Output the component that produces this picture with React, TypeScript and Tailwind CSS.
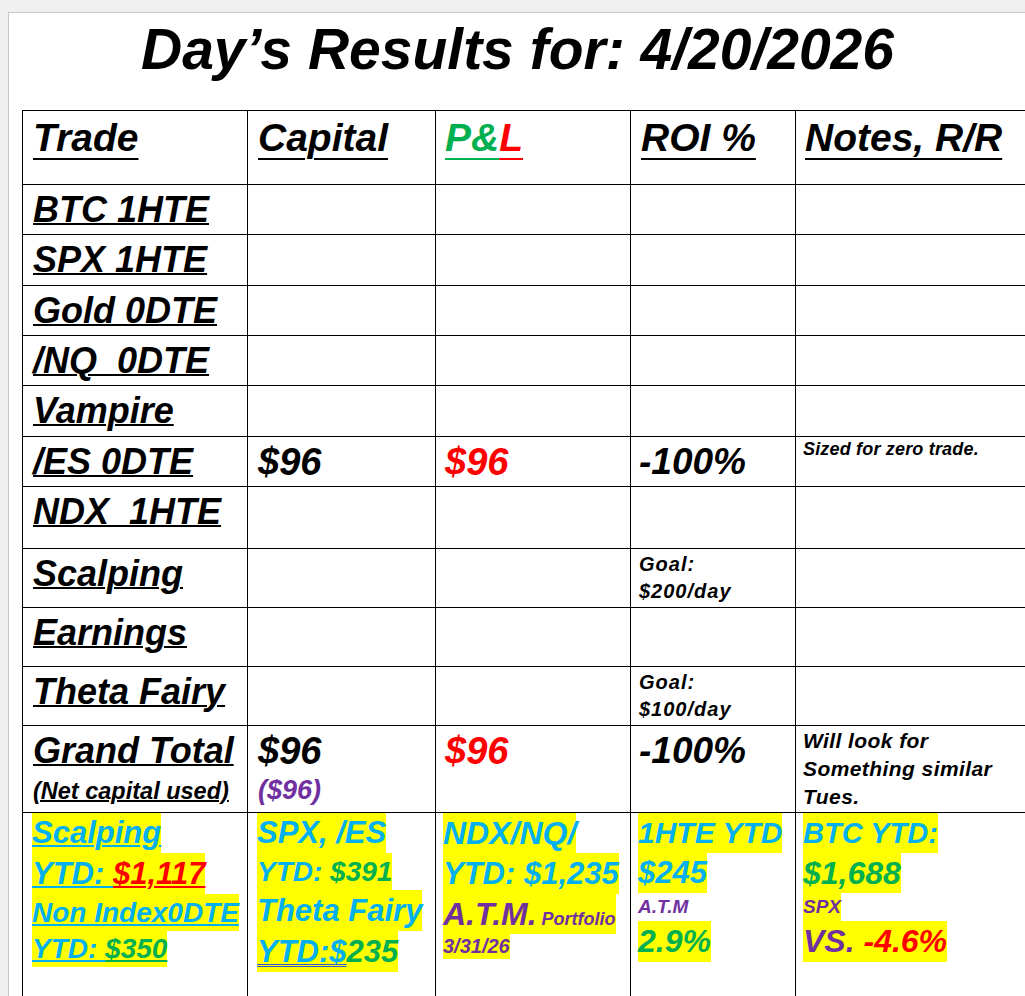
import React from "react";

const CY = "text-[#00b0f0]";
const GR = "text-[#00b050]";
const RD = "text-[#ff0000]";
const PU = "text-[#7030a0]";
const UL = "underline decoration-[1.5px] underline-offset-[2px]";

function Label({ children, pre }: { children: React.ReactNode; pre?: boolean }) {
  return (
    <div className="bg-white pl-[10px] pt-[7px] text-[36px] leading-[36px]">
      <span className={"underline decoration-[1.5px] underline-offset-[1px] " + (pre ? "whitespace-pre" : "")}>{children}</span>
    </div>
  );
}

function Blank() {
  return <div className="bg-white" />;
}

const HL = "inline-block bg-[#ffff00] align-top whitespace-pre";

export default function App() {
  return (
    <div className="w-[1025px] h-[996px] overflow-hidden bg-[#f0f0f0] font-['Liberation_Sans',Arial,sans-serif] font-bold italic text-black">
      <div className="ml-[8px] mt-[12px] w-[1100px] h-[1000px] border border-[#c8c8c8] bg-white">
        <div className="pl-[132px] pt-[8px] text-[57px] leading-[56px] whitespace-pre">Day’s Results for: 4/20/2026</div>
        <div className="ml-[13px] mt-[33px] grid grid-cols-[224px_187px_194px_164px_300px] grid-rows-[73px_49px_50px_49px_49px_50px_49px_61px_58px_58px_58px_86px_200px] gap-px bg-black p-px">
          {/* Header */}
          <div className="bg-white pl-[10px] pt-[7px] text-[39px] leading-[39px]">
            <span className="underline decoration-[2px] underline-offset-[7px]">Trade</span>
          </div>
          <div className="bg-white pl-[10px] pt-[7px] text-[39px] leading-[39px]">
            <span className="underline decoration-[2px] underline-offset-[7px]">Capital</span>
          </div>
          <div className="bg-white pl-[9px] pt-[7px] text-[39px] leading-[39px]">
            <span className={"underline decoration-[2px] underline-offset-[7px] " + GR}>P&amp;</span>
            <span className={"underline decoration-[2px] underline-offset-[7px] " + RD}>L</span>
          </div>
          <div className="bg-white pl-[10px] pt-[7px] text-[39px] leading-[39px]">
            <span className="underline decoration-[2px] underline-offset-[7px]">ROI %</span>
          </div>
          <div className="bg-white pl-[9px] pt-[7px] text-[39px] leading-[39px] whitespace-nowrap">
            <span className="underline decoration-[2px] underline-offset-[7px]">Notes, R/R</span>
          </div>

          <Label>BTC 1HTE</Label>
          <Blank /><Blank /><Blank /><Blank />
          <Label>SPX 1HTE</Label>
          <Blank /><Blank /><Blank /><Blank />
          <Label>Gold 0DTE</Label>
          <Blank /><Blank /><Blank /><Blank />
          <Label pre>/NQ  0DTE</Label>
          <Blank /><Blank /><Blank /><Blank />
          <Label>Vampire</Label>
          <Blank /><Blank /><Blank /><Blank />
          <Label>/ES 0DTE</Label>
          <div className="bg-white pl-[10px] pt-[7px] text-[38px] leading-[36px]">$96</div>
          <div className={"bg-white pl-[9px] pt-[7px] text-[38px] leading-[36px] " + RD}>$96</div>
          <div className="bg-white pl-[8px] pt-[7px] text-[37px] leading-[36px]">-100%</div>
          <div className="bg-white pl-[7px] pt-[3px] text-[18px] leading-[18px] tracking-[0.01em] whitespace-nowrap">Sized for zero trade.</div>
          <Label pre>NDX  1HTE</Label>
          <Blank /><Blank /><Blank /><Blank />
          <Label>Scalping</Label>
          <Blank /><Blank />
          <div className="bg-white pl-[8px] pt-[2px] text-[20px] leading-[27px] tracking-[0.05em] whitespace-nowrap">
            <div>Goal:</div>
            <div>$200/day</div>
          </div>
          <Blank />
          <Label>Earnings</Label>
          <Blank /><Blank /><Blank /><Blank />
          <Label>Theta Fairy</Label>
          <Blank /><Blank />
          <div className="bg-white pl-[8px] pt-[2px] text-[20px] leading-[27px] tracking-[0.05em] whitespace-nowrap">
            <div>Goal:</div>
            <div>$100/day</div>
          </div>
          <Blank />
          {/* Grand Total */}
          <div className="bg-white pl-[10px] pt-[7px] whitespace-nowrap">
            <div className="text-[36px] leading-[36px]">
              <span className="underline decoration-[2px] underline-offset-[1px]">Grand Total</span>
            </div>
            <div className="text-[23.5px] leading-[44px]">
              <span className="underline decoration-[1.5px] underline-offset-[1px]">(Net capital used)</span>
            </div>
          </div>
          <div className="bg-white pl-[10px] pt-[7px]">
            <div className="text-[38px] leading-[36px]">$96</div>
            <div className={"text-[27px] leading-[43px] " + PU}>($96)</div>
          </div>
          <div className={"bg-white pl-[9px] pt-[7px] text-[38px] leading-[36px] " + RD}>$96</div>
          <div className="bg-white pl-[8px] pt-[7px] text-[37px] leading-[36px]">-100%</div>
          <div className="bg-white pl-[7px] pt-[1px] text-[21px] leading-[28px] tracking-[0.02em] whitespace-nowrap">
            <div>Will look for</div>
            <div>Something similar</div>
            <div>Tues.</div>
          </div>

          {/* YTD row */}
          <div className="bg-white pl-[9px] whitespace-nowrap">
            <div className="h-[40px] text-[31px] leading-[40px]">
              <span className={HL}><span className={UL + " " + CY}>Scalping</span></span>
            </div>
            <div className="h-[41px] text-[31px] leading-[41px]">
              <span className={HL}>
                <span className={UL + " " + CY}>YTD: </span>
                <span className={UL + " " + RD}>$1,117</span>
              </span>
            </div>
            <div className="h-[37px] text-[28px] leading-[37px]">
              <span className={HL}><span className={UL + " " + CY}>Non Index0DTE</span></span>
            </div>
            <div className="h-[36px] text-[28px] leading-[36px]">
              <span className={HL}>
                <span className={UL + " " + CY}>YTD: </span>
                <span className={UL + " " + GR}>$350</span>
              </span>
            </div>
          </div>
          <div className="bg-white pl-[9px] whitespace-nowrap">
            <div className="h-[40px] text-[31px] leading-[40px]">
              <span className={HL}><span className={CY}>SPX, /ES</span></span>
            </div>
            <div className="h-[37px] text-[28px] leading-[37px]">
              <span className={HL}>
                <span className={CY}>YTD: </span>
                <span className={GR}>$391</span>
              </span>
            </div>
            <div className="h-[41px] text-[31px] leading-[41px]">
              <span className={HL}><span className={CY}>Theta Fairy</span></span>
            </div>
            <div className="h-[41px] text-[31px] leading-[41px]">
              <span className={HL}>
                <span className={"underline decoration-double decoration-[1px] underline-offset-[2px] decoration-[#3355dd] " + CY}>YTD:$</span>
                <span className={GR}>235</span>
              </span>
            </div>
          </div>
          <div className="bg-white pl-[7px] whitespace-nowrap">
            <div className="h-[40px] text-[32px] leading-[40px]">
              <span className={HL}><span className={CY}>NDX/NQ/</span></span>
            </div>
            <div className="h-[41px] text-[31px] leading-[41px]">
              <span className={HL}><span className={CY}>YTD: $1,235</span></span>
            </div>
            <div className="h-[40px] text-[32px] leading-[40px]">
              <span className={HL}>
                <span className={PU}>A.T.M.</span>
                <span className={"text-[18px] leading-none " + PU}> Portfolio</span>
              </span>
            </div>
            <div className="h-[25px] text-[20px] leading-[25px]">
              <span className={HL}><span className={PU}>3/31/26</span></span>
            </div>
          </div>
          <div className="bg-white pl-[7px] whitespace-nowrap">
            <div className="h-[40px] text-[30px] leading-[40px]">
              <span className={HL}><span className={CY}>1HTE YTD</span></span>
            </div>
            <div className="h-[40px] text-[31px] leading-[40px]">
              <span className={HL}><span className={CY}>$245</span></span>
            </div>
            <div className="h-[28px] text-[19px] leading-[28px]">
              <span className={PU}>A.T.M</span>
            </div>
            <div className="h-[41px] text-[32px] leading-[41px]">
              <span className={HL}><span className={GR}>2.9%</span></span>
            </div>
          </div>
          <div className="bg-white pl-[7px] whitespace-nowrap">
            <div className="h-[40px] text-[29px] leading-[40px]">
              <span className={HL}><span className={CY}>BTC YTD:</span></span>
            </div>
            <div className="h-[40px] text-[32px] leading-[40px]">
              <span className={HL}><span className={GR}>$1,688</span></span>
            </div>
            <div className="h-[28px] text-[19px] leading-[28px]">
              <span className={HL}><span className={PU}>SPX</span></span>
            </div>
            <div className="h-[41px] text-[32px] leading-[41px]">
              <span className={HL}>
                <span className={PU}>VS.</span>
                <span className={RD}> -4.6%</span>
              </span>
            </div>
          </div>
        </div>
      </div>
    </div>
  );
}
